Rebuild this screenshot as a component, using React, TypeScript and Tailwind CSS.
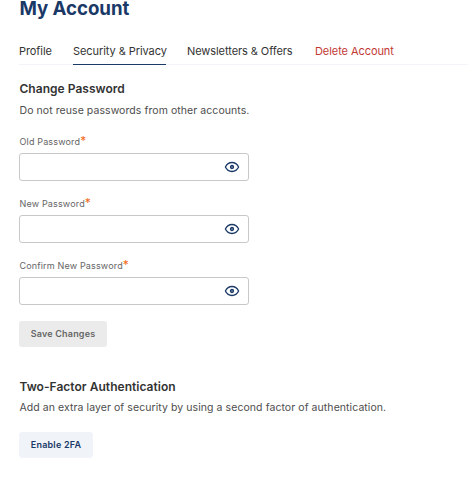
import { useState } from 'react';
import clsx from 'clsx';

const tabs = [
  { id: 'profile', label: 'Profile', width: 'w-[33px]' },
  { id: 'security', label: 'Security & Privacy', width: 'w-[93px]' },
  { id: 'newsletters', label: 'Newsletters & Offers', width: 'w-[107px]' },
  { id: 'delete', label: 'Delete Account', width: 'w-[80px]', danger: true },
];

const fields = [
  { id: 'old-password', label: 'Old Password' },
  { id: 'new-password', label: 'New Password' },
  { id: 'confirm-password', label: 'Confirm New Password' },
];

export default function App() {
  const [activeTab, setActiveTab] = useState('security');

  return (
    <main className="h-[478px] bg-white pl-[19px] font-['Inter',sans-serif] text-[#333333]">
      <h1 className="h-[38px] pl-[0.5px] text-[18.7px] leading-[17px] font-bold tracking-[-0.06px] text-[#1a3967]">
        My Account
      </h1>
      <nav className="flex h-[27px] gap-[21px] border-b border-[#f3f4f9]">
        {tabs.map((tab) => (
          <button
            key={tab.id}
            onClick={() => setActiveTab(tab.id)}
            className={clsx(
              '-mb-px h-[27px] border-b text-left text-[11px] leading-[26px] tracking-[-0.07px] whitespace-nowrap',
              tab.width,
              tab.id === activeTab ? 'border-[#1a3967]' : 'border-transparent',
              tab.danger && 'text-[#c23934]'
            )}
          >
            {tab.label}
          </button>
        ))}
      </nav>

      <section className="pt-[15px]">
        <SectionHeading
          title="Change Password"
          text="Do not reuse passwords from other accounts."
          textClassName="mt-[5px]"
        />
        <form className="mt-4 w-[230px]" onSubmit={(e) => e.preventDefault()}>
          {fields.map((field) => (
            <PasswordField key={field.id} id={field.id} label={field.label} />
          ))}
          <button
            disabled
            className="block h-[26px] w-[88px] rounded-[3px] bg-[#ebebeb] text-[9px] font-semibold tracking-[0.2px] text-[#666666]"
          >
            Save Changes
          </button>
        </form>
      </section>

      <section className="pt-[31px]">
        <SectionHeading
          title="Two-Factor Authentication"
          text="Add an extra layer of security by using a second factor of authentication."
          textClassName="mt-1"
        />
        <button className="mt-4 block h-[26px] w-[74px] rounded-[3px] bg-[#f0f4f9] text-[9px] font-semibold tracking-[0.2px] text-[#1a3967]">
          Enable 2FA
        </button>
      </section>
    </main>
  );
}

type SectionHeadingProps = {
  title: string;
  text: string;
  textClassName: string;
};

function SectionHeading({ title, text, textClassName }: SectionHeadingProps) {
  return (
    <>
      <h2 className="pl-[0.5px] text-[12px] leading-[18px] font-semibold tracking-[0.03px]">{title}</h2>
      <p className={clsx('pl-[0.5px] text-[10.5px] leading-4 tracking-[0.07px] text-[#4d4d4d]', textClassName)}>{text}</p>
    </>
  );
}

function PasswordField({ id, label }: { id: string; label: string }) {
  const [visible, setVisible] = useState(false);

  return (
    <div className="mb-4">
      <label htmlFor={id} className="block h-[18px] pl-[0.5px] text-[9px] leading-[13px] tracking-[0.16px] text-[#666666]">
        {label}
        <span className="text-[12px] leading-none text-[#f26a21]">*</span>
      </label>
      <div className="flex h-7 items-center rounded-[3px] border border-[#c8c8c8] pr-2">
        <input id={id} type={visible ? 'text' : 'password'} className="h-full min-w-0 flex-1 px-2 text-[11px] outline-none" />
        <button type="button" aria-label="Toggle password" onClick={() => setVisible(!visible)}>
          <EyeIcon />
        </button>
      </div>
    </div>
  );
}

function EyeIcon() {
  return (
    <svg width="16" height="16" viewBox="0 0 16 16" fill="none" stroke="#1a3967" strokeWidth="1.3">
      <path d="M1.4 8C2.8 5.1 5.1 3.5 8 3.5S13.2 5.1 14.6 8C13.2 10.9 10.9 12.5 8 12.5S2.8 10.9 1.4 8Z" />
      <circle cx="8" cy="8" r="1.5" fill="#8393ad" />
    </svg>
  );
}
